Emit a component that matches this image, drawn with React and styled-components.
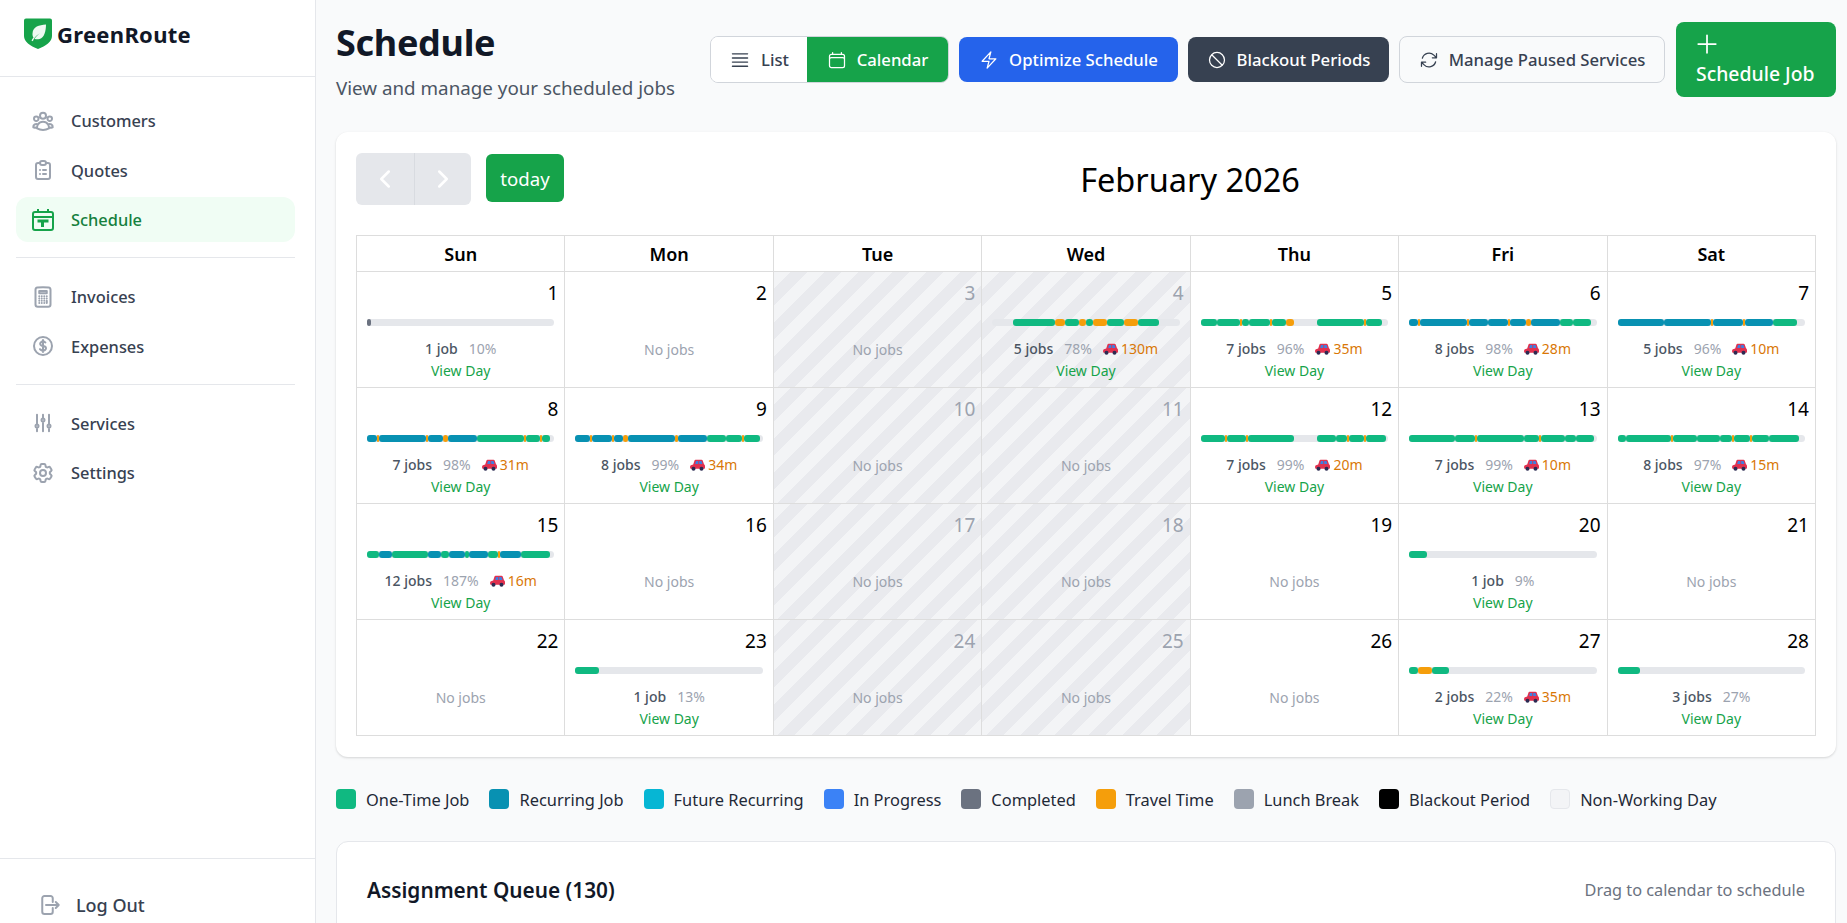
import React from "react";
import styled, { createGlobalStyle } from "styled-components";
import { ChevronLeft, ChevronRight } from "lucide-react";
import {
  HiOutlineUserGroup, HiOutlineCalculator, HiOutlineCurrencyDollar, HiOutlineAdjustmentsVertical,
  HiOutlineCog6Tooth, HiOutlineArrowRightOnRectangle, HiOutlineBars4, HiOutlineCalendar, HiOutlineBolt,
  HiOutlineNoSymbol, HiOutlineArrowPath, HiOutlinePlus,
} from "react-icons/hi2";
import { HiOutlineClipboardList } from "react-icons/hi";

const Global = createGlobalStyle`
  html, body { margin: 0; height: 923px; overflow: hidden; background: #f9fafb; }
  body { font-family: "Noto Sans", "Open Sans", Arial, sans-serif; color: #000; }
  * { box-sizing: border-box; }
`;

const Shell = styled.div`display: flex; height: 923px; overflow: hidden;`;
const Sidebar = styled.aside`
  width: 316px; flex: none; height: 923px; background: #fff; border-right: 1px solid #e5e7eb;
  display: flex; flex-direction: column;
`;
const Brand = styled.div`
  height: 77px; border-bottom: 1px solid #e5e7eb; display: flex; align-items: center; gap: 4px; padding: 0 0 9px 23px;
`;
const BrandName = styled.span`font-size: 22px; font-weight: 700; color: #111827; letter-spacing: 0.3px;`;
const Nav = styled.nav`flex: 1; padding: 21px 20px 0 16px; display: flex; flex-direction: column;`;
const NavGroup = styled.div`display: flex; flex-direction: column; gap: 4.5px;`;
const NavDivider = styled.div`height: 1px; background: #e5e7eb; margin: 15px 0 16px;`;
const NavItem = styled.a`
  height: 45px; display: flex; align-items: center; gap: 16px; padding-left: 15px; border-radius: 12px;
  font-size: 16.4px; font-weight: 500;
  color: ${p => (p.$active ? "#15803d" : "#374151")};
  background: ${p => (p.$active ? "#f0fdf4" : "transparent")};
  svg { color: ${p => (p.$active ? "#16a34a" : "#9ca3af")}; flex: none; stroke-width: 2; }
`;
const SideFooter = styled.div`
  height: 65px; border-top: 1px solid #e5e7eb; display: flex; align-items: flex-start; gap: 15px; padding: 32px 0 0 37px;
  font-size: 18px; line-height: 28px; font-weight: 500; color: #374151;
  svg { color: #9ca3af; margin-top: 2px; stroke-width: 2; }
`;

const Main = styled.main`flex: 1; min-width: 0; padding: 22px 11px 0 20px;`;
const Header = styled.header`display: flex; justify-content: space-between; align-items: center; height: 75px; margin-bottom: 35px;`;
const TitleBlock = styled.div`height: 75px;`;
const Title = styled.h1`margin: 0; font-size: 36px; line-height: 42px; font-weight: 700; color: #111827; letter-spacing: -0.3px;`;
const Subtitle = styled.p`margin: 11px 0 0; font-size: 18.8px; line-height: 26px; color: #4b5563;`;
const Actions = styled.div`display: flex; align-items: center; gap: 10px;`;
const Toggle = styled.div`display: flex; height: 47px; border: 1px solid #d1d5db; border-radius: 8px; overflow: hidden; background: #fff;`;
const ToggleBtn = styled.button`
  border: 0; height: 100%; width: ${p => p.$w}px; display: flex; align-items: center; justify-content: center; gap: 10px;
  font: 500 16.7px "Noto Sans", sans-serif;
  color: ${p => (p.$on ? "#fff" : "#374151")};
  background: ${p => (p.$on ? "#16a34a" : "#fff")};
`;
const ActionBtn = styled.button`
  height: ${p => (p.$outline ? 47 : 45)}px; width: ${p => p.$w}px; display: flex; align-items: center; justify-content: center; gap: 10px;
  border-radius: 8px; border: ${p => (p.$outline ? "1px solid #d1d5db" : "0")};
  font: 500 16.7px "Noto Sans", sans-serif;
  color: ${p => p.$fg}; background: ${p => p.$bg};
`;
const ScheduleBtn = styled.button`
  width: 160px; height: 75px; margin-left: 1px; border: 0; border-radius: 8px; background: #16a34a; color: #fff;
  font: 500 19.4px/26px "Noto Sans", sans-serif; text-align: left; padding: 8px 0 0 20px;
  display: flex; flex-direction: column; align-items: flex-start; gap: 3px;
  svg { margin-left: -3px; }
`;

const Card = styled.section`
  background: #fff; border-radius: 12px; box-shadow: 0 1px 3px rgba(0,0,0,.1), 0 1px 2px rgba(0,0,0,.06);
  padding: 20px; height: 625px;
`;
const Toolbar = styled.div`display: flex; justify-content: space-between; align-items: center; height: 54px; margin-bottom: 29px;`;
const ToolLeft = styled.div`display: flex; align-items: center; gap: 15px;`;
const NavBtns = styled.div`display: flex; height: 52px; border-radius: 6px; overflow: hidden;`;
const NavBtn = styled.button`
  width: 57.5px; border: 0; padding: 0; background: #e5e7eb; color: #fff; display: flex; align-items: center; justify-content: center;
  & + & { border-left: 1px solid #d8dbe0; }
`;
const TodayBtn = styled.button`
  width: 78px; height: 48px; margin-top: -2px; border: 0; padding: 0; border-radius: 6px; background: #16a34a; color: #fff; font: 400 18.6px "Noto Sans", sans-serif;
`;
const MonthTitle = styled.h2`margin: 0; font-size: 32.5px; font-weight: 400; color: #000;`;
const Grid = styled.div`
  display: grid; grid-template-columns: repeat(7, 1fr); grid-template-rows: 36px repeat(4, 116px);
  border-top: 1px solid #ddd; border-left: 1px solid #ddd;
`;
const DayName = styled.div`
  border-right: 1px solid #ddd; border-bottom: 1px solid #ddd; display: flex; align-items: center; justify-content: center;
  font-size: 18px; font-weight: 600; color: #000;
`;
const Cell = styled.div`
  border-right: 1px solid #ddd; border-bottom: 1px solid #ddd; display: flex; flex-direction: column; align-items: stretch; min-width: 0;
  background: ${p => (p.$off ? "repeating-linear-gradient(-45deg, #f3f4f6 0 12px, #e9eaee 12px 24px)" : "#fff")};
`;
const DayNum = styled.div`
  height: 47px; padding: 8px 6px 0 0; text-align: right; font-size: 19px; line-height: 26px;
  color: ${p => (p.$off ? "#9ca3af" : "#000")};
`;
const BarTrack = styled.div`position: relative; height: 7px; margin: 0 10px; background: #e5e7eb; border-radius: 4px;`;
const Seg = styled.span`position: absolute; top: 0; bottom: 0; border-radius: 3px; background: ${p => p.$c};`;
const Stats = styled.div`
  height: 23px; margin-top: 11px; display: flex; justify-content: center; align-items: center; gap: 11px; font-size: 14px; white-space: nowrap;
`;
const Jobs = styled.span`font-weight: 500; color: #4b5563;`;
const Pct = styled.span`color: #9ca3af;`;
const Travel = styled.span`display: inline-flex; align-items: center; gap: 3px; color: #d97706;`;
const ViewDay = styled.a`display: block; text-align: center; font-size: 14px; line-height: 21px; color: #16a34a;`;
const NoJobs = styled.div`margin-top: 20px; text-align: center; font-size: 14px; line-height: 21px; color: #9ca3af;`;

const Legend = styled.div`display: flex; align-items: center; gap: 20px; margin-top: 32px; height: 20px;`;
const LegendItem = styled.div`display: flex; align-items: center; gap: 10px; font-size: 16.4px; color: #1f2937; white-space: nowrap;`;
const Swatch = styled.span`
  width: 20px; height: 20px; border-radius: 4px; background: ${p => p.$c};
  border: ${p => (p.$b ? "1px solid #e5e7eb" : "0")};
`;
const QueueCard = styled.section`
  margin-top: 32px; height: 300px; background: #fff; border: 1px solid #e5e7eb; border-radius: 12px;
  padding: 32px 30px 0; display: flex; justify-content: space-between; align-items: flex-start;
`;
const QueueTitle = styled.h3`margin: 0; font-size: 20.8px; line-height: 32px; font-weight: 600; color: #111827;`;
const QueueHint = styled.span`font-size: 16.3px; line-height: 32px; color: #6b7280;`;

const Logo = () => (
  <svg width="30" height="33" viewBox="0 0 30 33">
    <path d="M3 1.500h24a2 2 0 0 1 2 2V19c0 5.500-6 10-14 13C7 29 1 24.500 1 19V3.500a2 2 0 0 1 2-2Z" fill="#16a34a" />
    <path d="M23 7.500c-7 .5-13 2-13.500 9-.2 1.500.3 3 1 4-1 1-1.500 2-2 3l1.300.8c.8-2.300 2.800-5.500 7-8-3 2.600-4.500 4.300-5.200 5.500 1 .6 3 .8 5 .2 5-1.600 6.300-8 6.400-14.500Z" fill="#fff" opacity=".93" />
  </svg>
);

const ScheduleIcon = () => (
  <svg width="24" height="22" viewBox="-1 0 24 22" fill="none" stroke="currentColor" strokeWidth="2">
    <rect x="1" y="3" width="20" height="18" rx="2" />
    <path d="M1 8h20M6 0v4M16 0v4" />
    <path d="M5.500 10.500h11v3h-4.500v4.500h-3v-4.500h-3.500z" fill="currentColor" stroke="none" />
  </svg>
);

const Car = () => (
  <svg width="15" height="12" viewBox="0 0 15 12">
    <path d="M1 6.200 3.200 5.500 4.500 1.500C4.700 1 5 .8 5.500.8h6c.6 0 1 .2 1.200.8l1.300 3.700c.7.4 1 .9 1 1.700v2c0 .5-.3.800-.8.800H1c-.5 0-.9-.3-.9-.8V7.400c0-.6.300-1 .9-1.200Z" fill="#e0314f" />
    <path d="M5.200 5 6 2h2.300v3zM9.200 2h2.300l1 3H9.200z" fill="#3f7fe0" />
    <circle cx="3.500" cy="9.800" r="2" fill="#2b2a52" />
    <circle cx="11.500" cy="9.800" r="2" fill="#2b2a52" />
  </svg>
);

const COLORS = { g: "#10b981", b: "#0891b2", o: "#f59e0b", s: "#6b7280" };

const parse = (str) =>
  str.split(",").map((s) => {
    const m = s.match(/([gbos])(\d+)-(\d+)/);
    return { c: COLORS[m[1]], a: +m[2], z: +m[3] };
  });

const Bar = ({ segs }) => (
  <BarTrack>
    {parse(segs).map((s, i) => (
      <Seg key={i} $c={s.c} style={{ left: `${(s.a / 564) * 100}%`, width: `${((s.z - s.a) / 564) * 100}%` }} />
    ))}
  </BarTrack>
);

const DAYS = [
  { n: 1, jobs: "1 job", pct: "10%", segs: "s0-12" },
  { n: 2 },
  { n: 3, off: true },
  { n: 4, off: true, jobs: "5 jobs", pct: "78%", mins: "130m", segs: "g63-189,o189-219,g219-261,o261-282,g282-303,o303-345,g345-396,o396-438,g438-501" },
  { n: 5, jobs: "7 jobs", pct: "96%", mins: "35m", segs: "g0-48,g48-118,o118-124,g124-146,g146-208,o208-214,g214-258,o258-282,g351-492,o492-498,g498-546" },
  { n: 6, jobs: "8 jobs", pct: "98%", mins: "28m", segs: "b0-27,o27-33,b33-173,o173-180,b180-236,b236-298,o298-304,b304-351,o351-366,b366-453,g453-492,g492-546" },
  { n: 7, jobs: "5 jobs", pct: "96%", mins: "10m", segs: "b0-140,b140-281,o281-288,b288-376,o376-382,b382-468,g468-540" },
  { n: 8, jobs: "7 jobs", pct: "98%", mins: "31m", segs: "b0-30,o30-36,b36-177,o177-183,b183-228,o228-243,b243-330,g330-471,o471-477,g477-522,o522-528,g528-552" },
  { n: 9, jobs: "8 jobs", pct: "99%", mins: "34m", segs: "b0-45,o45-51,b51-111,o111-117,b117-144,o144-159,b159-300,o300-309,b309-396,g396-453,g453-501,o501-507,g507-556" },
  { n: 10, off: true },
  { n: 11, off: true },
  { n: 12, jobs: "7 jobs", pct: "99%", mins: "20m", segs: "g0-72,o72-78,g78-135,o135-141,g141-282,g351-408,g408-441,o441-447,g447-492,o492-498,g498-558" },
  { n: 13, jobs: "7 jobs", pct: "99%", mins: "10m", segs: "g0-138,g138-198,o198-204,g204-345,g345-390,o390-396,g396-468,g468-501,g501-555" },
  { n: 14, jobs: "8 jobs", pct: "97%", mins: "15m", segs: "g0-24,g24-162,o162-168,g168-240,g240-309,g309-345,o345-351,g351-399,o399-405,g405-456,g456-546" },
  { n: 15, jobs: "12 jobs", pct: "187%", mins: "16m", segs: "g0-36,b36-75,g75-183,b183-222,g222-246,b246-294,g294-306,b306-363,g363-393,o393-399,b399-463,g463-552" },
  { n: 16 },
  { n: 17, off: true },
  { n: 18, off: true },
  { n: 19 },
  { n: 20, jobs: "1 job", pct: "9%", segs: "g0-54" },
  { n: 21 },
  { n: 22 },
  { n: 23, jobs: "1 job", pct: "13%", segs: "g0-72" },
  { n: 24, off: true },
  { n: 25, off: true },
  { n: 26 },
  { n: 27, jobs: "2 jobs", pct: "22%", mins: "35m", segs: "g0-27,o27-69,g69-120" },
  { n: 28, jobs: "3 jobs", pct: "27%", segs: "g0-69" },
];

const LEGEND = [
  ["One-Time Job", "#10b981"], ["Recurring Job", "#0891b2"], ["Future Recurring", "#06b6d4"], ["In Progress", "#3b82f6"],
  ["Completed", "#6b7280"], ["Travel Time", "#f59e0b"], ["Lunch Break", "#9ca3af"], ["Blackout Period", "#000"], ["Non-Working Day", "#f3f4f6", true],
];

export default function App() {
  return (
    <>
      <Global />
      <Shell>
        <Sidebar>
          <Brand><Logo /><BrandName>GreenRoute</BrandName></Brand>
          <Nav>
            <NavGroup>
              <NavItem><HiOutlineUserGroup size={24} />Customers</NavItem>
              <NavItem><HiOutlineClipboardList size={24} />Quotes</NavItem>
              <NavItem $active><ScheduleIcon />Schedule</NavItem>
            </NavGroup>
            <NavDivider />
            <NavGroup>
              <NavItem><HiOutlineCalculator size={24} />Invoices</NavItem>
              <NavItem><HiOutlineCurrencyDollar size={24} />Expenses</NavItem>
            </NavGroup>
            <NavDivider />
            <NavGroup>
              <NavItem><HiOutlineAdjustmentsVertical size={24} />Services</NavItem>
              <NavItem><HiOutlineCog6Tooth size={24} />Settings</NavItem>
            </NavGroup>
          </Nav>
          <SideFooter><HiOutlineArrowRightOnRectangle size={24} />Log Out</SideFooter>
        </Sidebar>
        <Main>
          <Header>
            <TitleBlock>
              <Title>Schedule</Title>
              <Subtitle>View and manage your scheduled jobs</Subtitle>
            </TitleBlock>
            <Actions>
              <Toggle>
                <ToggleBtn $w={96}><HiOutlineBars4 size={22} />List</ToggleBtn>
                <ToggleBtn $w={141} $on><HiOutlineCalendar size={20} />Calendar</ToggleBtn>
              </Toggle>
              <ActionBtn $w={219} $bg="#2563eb" $fg="#fff"><HiOutlineBolt size={20} />Optimize Schedule</ActionBtn>
              <ActionBtn $w={201} $bg="#374151" $fg="#fff"><HiOutlineNoSymbol size={20} />Blackout Periods</ActionBtn>
              <ActionBtn $w={266} $outline $bg="#f9fafb" $fg="#374151"><HiOutlineArrowPath size={20} />Manage Paused Services</ActionBtn>
              <ScheduleBtn><HiOutlinePlus size={28} />Schedule Job</ScheduleBtn>
            </Actions>
          </Header>
          <Card>
            <Toolbar>
              <ToolLeft>
                <NavBtns>
                  <NavBtn><ChevronLeft size={30} /></NavBtn>
                  <NavBtn><ChevronRight size={30} /></NavBtn>
                </NavBtns>
                <TodayBtn>today</TodayBtn>
              </ToolLeft>
              <MonthTitle>February 2026</MonthTitle>
              <div />
            </Toolbar>
            <Grid>
              {["Sun", "Mon", "Tue", "Wed", "Thu", "Fri", "Sat"].map((d) => <DayName key={d}>{d}</DayName>)}
              {DAYS.map((d) => (
                <Cell key={d.n} $off={d.off}>
                  <DayNum $off={d.off}>{d.n}</DayNum>
                  {d.jobs ? (
                    <>
                      <Bar segs={d.segs} />
                      <Stats>
                        <Jobs>{d.jobs}</Jobs>
                        <Pct>{d.pct}</Pct>
                        {d.mins && <Travel><Car />{d.mins}</Travel>}
                      </Stats>
                      <ViewDay>View Day</ViewDay>
                    </>
                  ) : (
                    <NoJobs>No jobs</NoJobs>
                  )}
                </Cell>
              ))}
            </Grid>
          </Card>
          <Legend>
            {LEGEND.map(([t, c, b]) => (
              <LegendItem key={t}><Swatch $c={c} $b={b} />{t}</LegendItem>
            ))}
          </Legend>
          <QueueCard>
            <QueueTitle>Assignment Queue (130)</QueueTitle>
            <QueueHint>Drag to calendar to schedule</QueueHint>
          </QueueCard>
        </Main>
      </Shell>
    </>
  );
}
